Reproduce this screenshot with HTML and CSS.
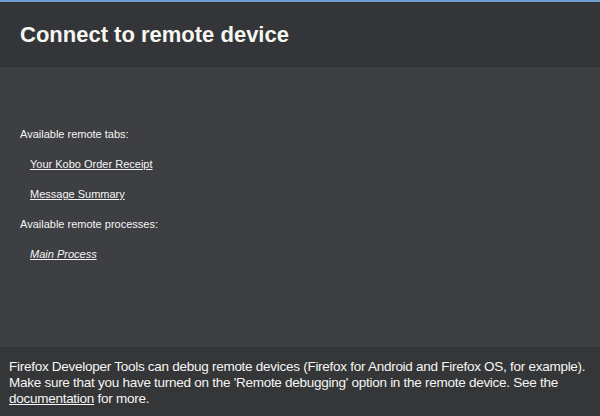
FILE: index.html
```html
<!DOCTYPE html>
<html>
<head>
<meta charset="utf-8">
<link rel="stylesheet" href="styles.css">
</head>
<body>
<div class="topline"></div>
<header class="header">
  <h1 class="title">Connect to remote device</h1>
</header>
<main class="main">
  <p class="label">Available remote tabs:</p>
  <a class="item" href="#">Your Kobo Order Receipt</a>
  <a class="item" href="#">Message Summary</a>
  <p class="label">Available remote processes:</p>
  <a class="item italic" href="#">Main Process</a>
</main>
<footer class="footer">
  <p class="help">Firefox Developer Tools can debug remote devices (Firefox for Android and Firefox OS, for example). Make sure that you have turned on the 'Remote debugging' option in the remote device. See the <a href="#" class="doclink">documentation</a> for more.</p>
</footer>
</body>
</html>
```
FILE: styles.css
```css
html, body {
  margin: 0;
  padding: 0;
  height: 100%;
}
body {
  display: flex;
  flex-direction: column;
  background: #3e3f42;
  font-family: "Liberation Sans", Arial, sans-serif;
  color: #f5f5f5;
}
.topline {
  height: 2px;
  background: #6c9dd2;
}
.header {
  height: 65px;
  background: #343538;
  border-bottom: 1px solid #2e2f31;
  box-sizing: border-box;
  padding: 20px 20px 0;
}
.title {
  margin: 0;
  font-size: 22px;
  font-weight: bold;
  line-height: 26px;
  color: #f5f7f0;
}
.main {
  flex: 1;
  display: flex;
  flex-direction: column;
  align-items: flex-start;
  padding: 61px 20px 0;
  font-size: 11px;
}
.label {
  margin: 0;
  height: 30px;
  line-height: 13px;
}
.item {
  margin-left: 10px;
  height: 30px;
  line-height: 13px;
  color: #f5f5f5;
  text-decoration: underline;
}
.italic {
  font-style: italic;
}
.footer {
  height: 69px;
  background: #353638;
  box-sizing: border-box;
  padding: 12px 9px 0;
}
.help {
  margin: 0;
  font-size: 13.5px;
  letter-spacing: -0.27px;
  line-height: 16px;
  color: #f5f5f5;
}
.doclink {
  color: #f5f5f5;
  text-decoration: underline;
}
```
